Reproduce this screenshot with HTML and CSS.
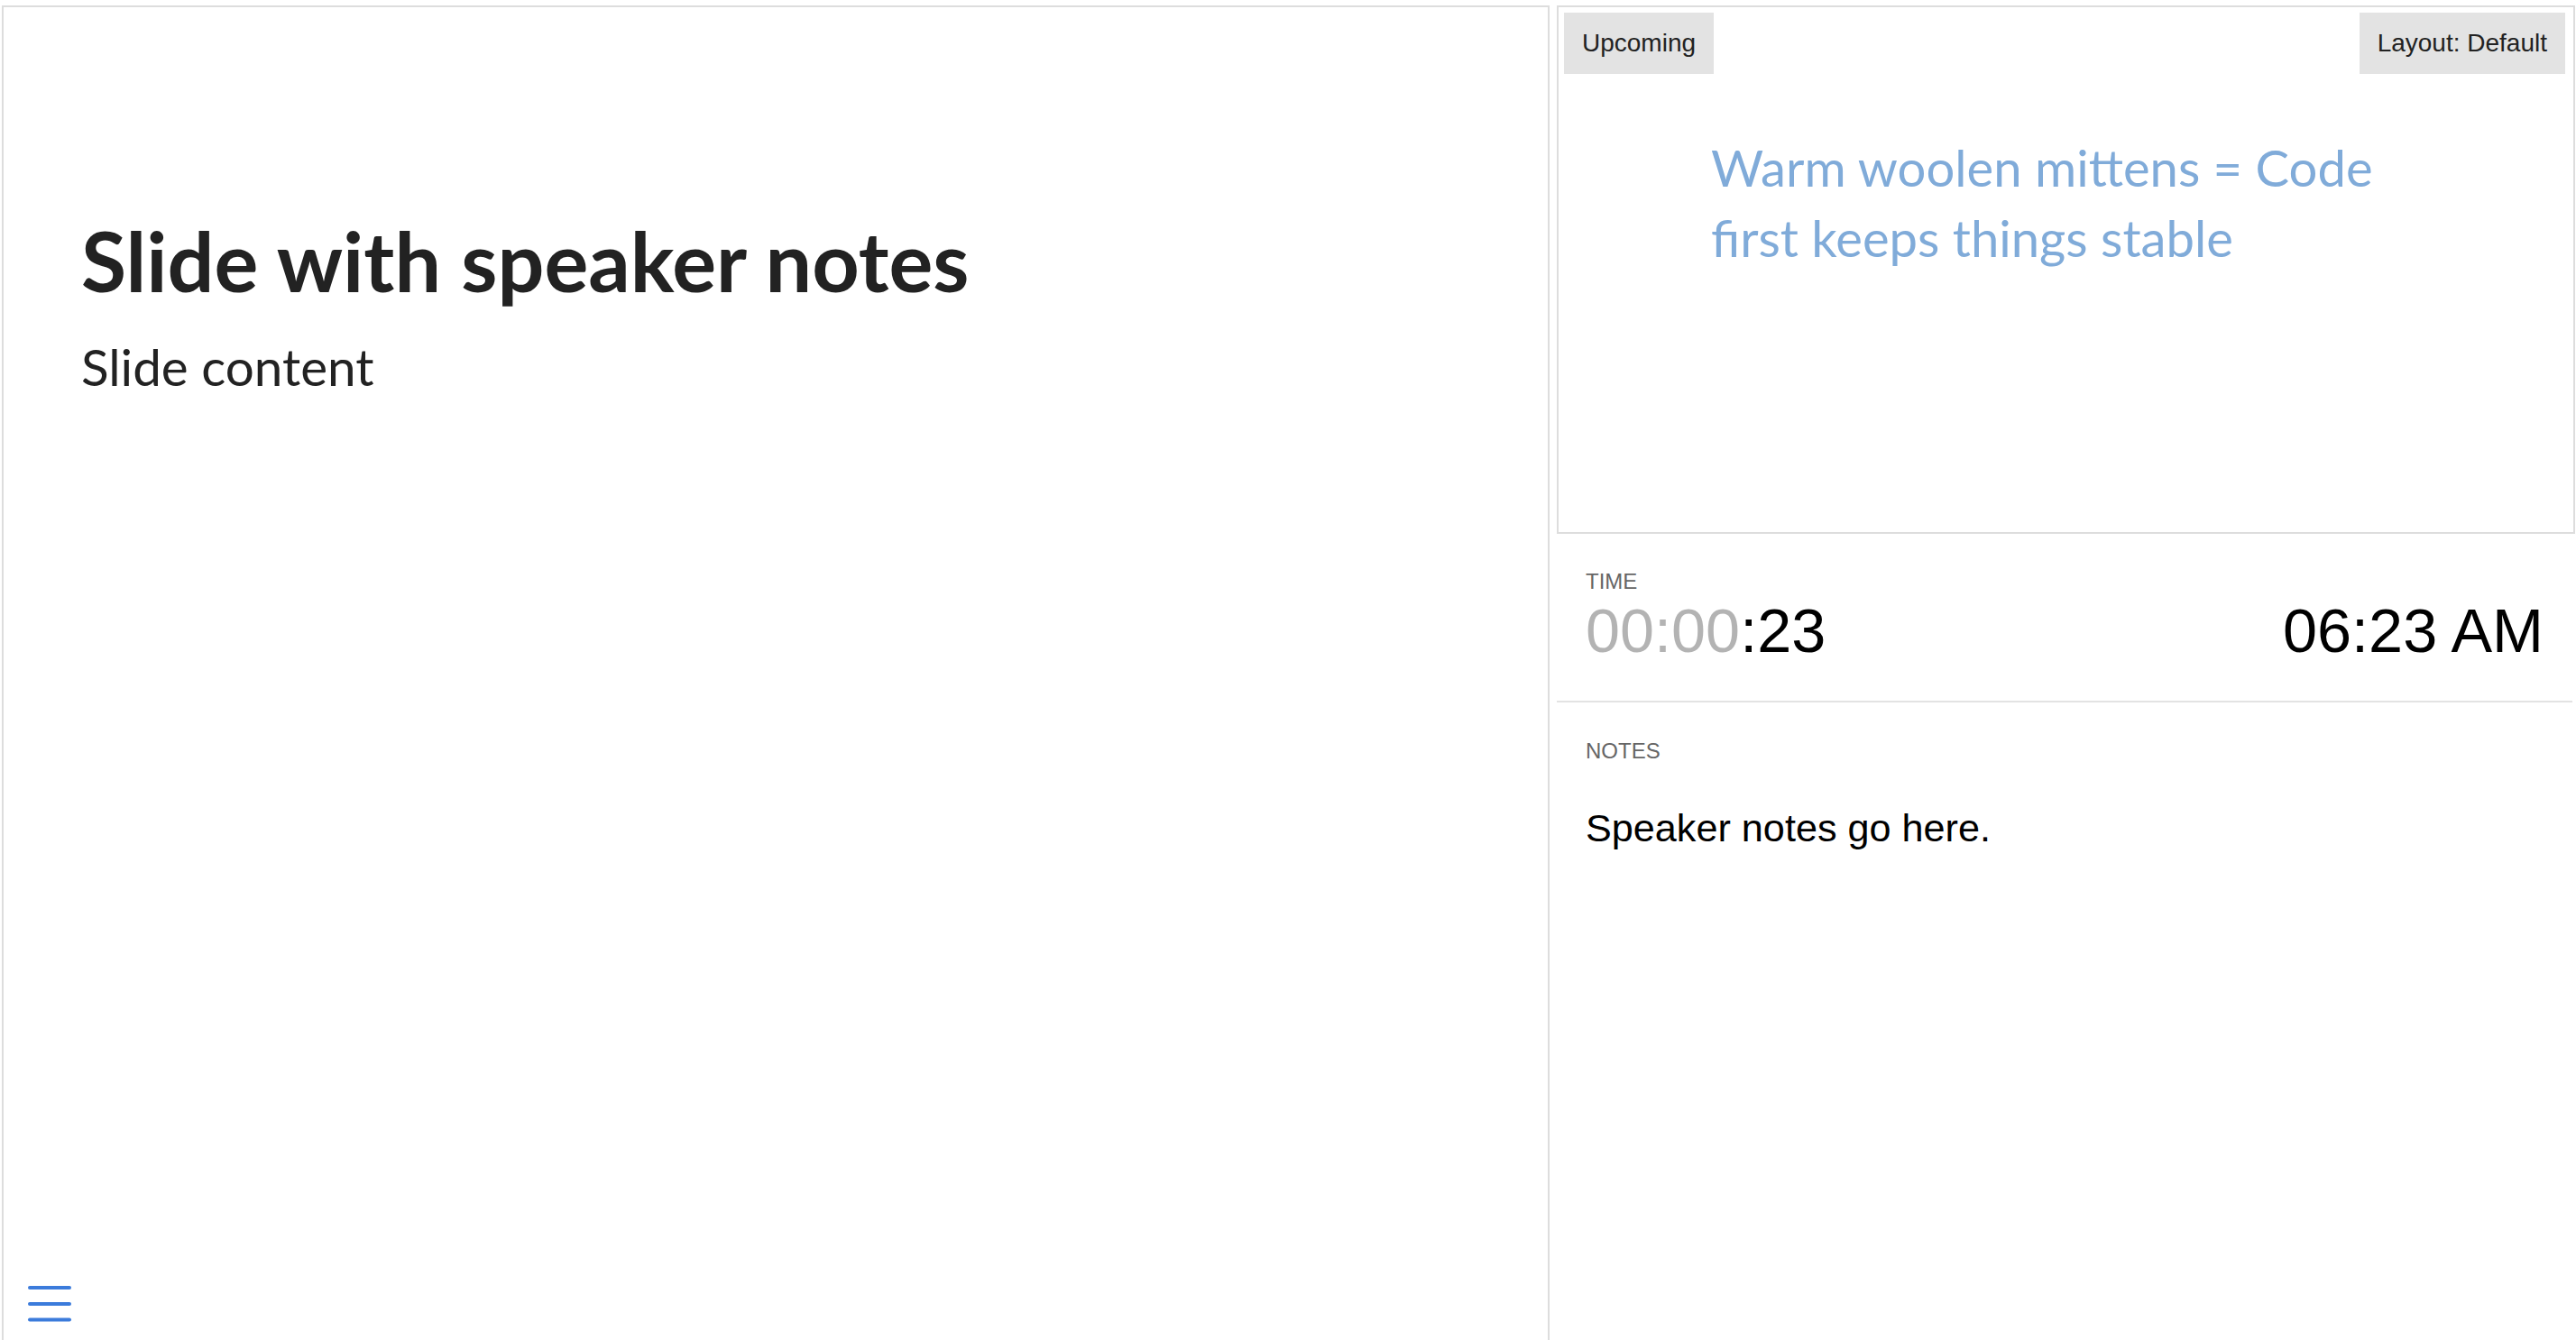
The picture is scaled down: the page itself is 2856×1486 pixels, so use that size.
FILE: index.html
```html
<!DOCTYPE html>
<html lang="en">
<head>
<meta charset="utf-8">
<title>Speaker view</title>
<link rel="stylesheet" href="styles.css">
</head>
<body>
<div class="app">
  <div class="current">
    <div class="slide">
      <h2 class="slide-title">Slide with speaker notes</h2>
      <p class="slide-text">Slide content</p>
    </div>
    <svg class="menu-btn" width="52" height="44" viewBox="0 0 52 44" aria-hidden="true">
      <g stroke="#3b7bdb" stroke-width="4" stroke-linecap="round">
        <line x1="4" y1="4" x2="48" y2="4"/>
        <line x1="4" y1="22" x2="48" y2="22"/>
        <line x1="4" y1="39.5" x2="48" y2="39.5"/>
      </g>
    </svg>
  </div>
  <div class="side">
    <div class="upcoming">
      <div class="overlay-label upcoming-label">Upcoming</div>
      <div class="overlay-label layout-label">Layout: Default</div>
      <div class="up-slide">
        <p class="up-text">Warm woolen mittens = Code<br>first keeps things stable</p>
      </div>
    </div>
    <div class="controls">
      <div class="time-section">
        <div class="label">Time</div>
        <div class="time-row">
          <div class="timer"><span class="mute">00:00</span>:23</div>
          <div class="clock">06:23 AM</div>
        </div>
      </div>
      <div class="notes-section">
        <div class="label">Notes</div>
        <div class="notes-value">Speaker notes go here.</div>
      </div>
    </div>
  </div>
</div>
</body>
</html>
```
FILE: styles.css
```css
html, body {
  margin: 0;
  padding: 0;
  background: #fff;
}
body {
  width: 2856px;
  height: 1486px;
  overflow: hidden;
}
.app {
  display: flex;
  align-items: flex-start;
  width: 2856px;
  height: 1486px;
}
.current {
  position: relative;
  box-sizing: border-box;
  margin: 6px 0 0 2px;
  width: 1716px;
  height: 1500px;
  border: 2px solid #dddddd;
}
.slide {
  padding: 231px 0 0 86px;
  font-family: Lato, "Noto Sans", sans-serif;
  color: #222;
}
.slide-title {
  margin: 0;
  font-size: 91.5px;
  line-height: 100px;
  font-weight: 700;
}
.slide-text {
  margin: 32px 0 0 0;
  font-size: 56.6px;
  line-height: 70px;
  font-weight: 400;
}
.menu-btn {
  position: absolute;
  left: 25px;
  top: 1416px;
}
.side {
  margin-left: 8px;
  width: 1129px;
  display: flex;
  flex-direction: column;
}
.upcoming {
  position: relative;
  box-sizing: border-box;
  margin-top: 6px;
  height: 586px;
  border: 2px solid #dddddd;
}
.overlay-label {
  position: absolute;
  top: 6px;
  height: 68px;
  line-height: 68px;
  padding: 0 20px;
  background: #e3e3e3;
  color: #222;
  font-family: "Liberation Sans", Arial, sans-serif;
  font-size: 28px;
}
.upcoming-label {
  left: 6px;
}
.layout-label {
  right: 9px;
}
.up-slide {
  padding: 139px 0 0 169px;
}
.up-text {
  margin: 0;
  font-family: Lato, "Noto Sans", sans-serif;
  font-size: 56.2px;
  line-height: 78px;
  color: #80abd9;
}
.controls {
  font-family: "Liberation Sans", Arial, sans-serif;
  color: #000;
}
.label {
  font-size: 24px;
  line-height: 28px;
  color: #666;
  text-transform: uppercase;
}
.time-section {
  width: 1126px;
  box-sizing: border-box;
  padding: 39px 32px 38px 32px;
  border-bottom: 2px solid #e3e3e3;
}
.time-row {
  display: flex;
  justify-content: space-between;
  font-size: 68.4px;
  line-height: 80px;
}
.mute {
  color: #b3b3b3;
}
.notes-section {
  padding: 40px 32px 0 32px;
}
.notes-value {
  margin-top: 41px;
  font-size: 43.2px;
  line-height: 60.5px;
}
```
